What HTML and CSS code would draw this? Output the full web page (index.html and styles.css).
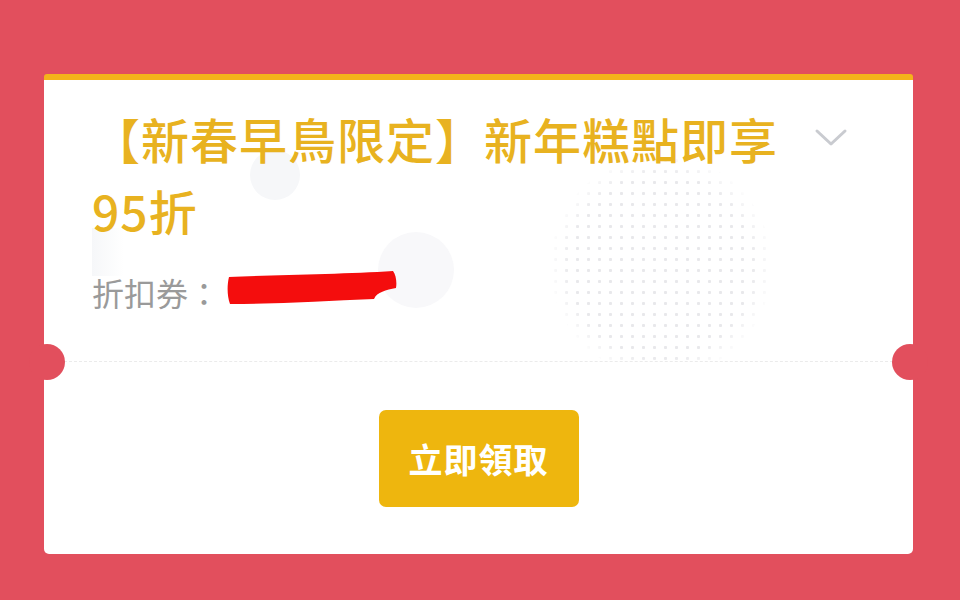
FILE: index.html
```html
<!DOCTYPE html>
<html lang="zh-Hant">

<head>
    <meta charset="UTF-8">
    <meta name="viewport" content="width=device-width, initial-scale=1.0">
    <title>折扣券</title>
    <link rel="stylesheet" href="styles.css">
</head>

<body>
    <div class="coupon">
        <div class="coupon-top">
            <span class="deco deco-dot-small"></span>
            <span class="deco deco-dot-large"></span>
            <span class="deco deco-bar"></span>
            <span class="deco deco-pattern"></span>

            <div class="coupon-head">
                <h2 class="coupon-title">【新春早鳥限定】新年糕點即享95折</h2>
                <button class="toggle" aria-label="展開">
                    <svg width="34" height="20" viewBox="0 0 34 20">
                        <path d="M3 3 L17 16 L31 3" fill="none" stroke="#c9cbd0" stroke-width="3" stroke-linecap="round" stroke-linejoin="round"/>
                    </svg>
                </button>
            </div>
            <div class="coupon-code">
                <span>折扣券：</span>
                <svg class="redact" width="172" height="36" viewBox="0 0 172 36">
                    <path d="M3 7 C50 5 120 4 167 1 C170 5 171 12 170 18 C160 20 151 22 148 29 C100 31 50 34 4 34 C1 26 1 15 3 7 Z" fill="#f40d0d"/>
                </svg>
            </div>
        </div>

        <div class="coupon-bottom">
            <button class="claim">立即領取</button>
        </div>

        <span class="notch notch-left"></span>
        <span class="notch notch-right"></span>
    </div>
</body>

</html>
```

FILE: styles.css
```css
body {
    margin: 0;
    padding: 74px 47px 46px 44px;
    background-color: #e24f5d;
    font-family: "Noto Sans CJK TC", "Noto Sans", sans-serif;
}

.coupon {
    position: relative;
    height: 474px;
    background: #fff;
    border-top: 6px solid #f4b31a;
    border-radius: 3px 3px 5px 5px;
}

.coupon-top {
    position: relative;
    height: 259px;
    padding: 22px 0 0 48px;
    border-bottom: 1px dashed #ebebeb;
    margin-right: 20px;
    overflow: hidden;
}

.deco {
    position: absolute;
    background: #f6f7f9;
}

.deco-dot-small {
    left: 206px;
    top: 70px;
    width: 50px;
    height: 50px;
    border-radius: 50%;
}

.deco-dot-large {
    left: 334px;
    top: 152px;
    width: 76px;
    height: 76px;
    border-radius: 50%;
    background: #f8f8fa;
}

.deco-bar {
    left: 48px;
    top: 148px;
    width: 32px;
    height: 48px;
    background: linear-gradient(90deg, #f6f7f9, #fff);
}

.deco-pattern {
    left: 506px;
    top: 75px;
    width: 222px;
    height: 222px;
    border-radius: 50%;
    background: radial-gradient(circle, #e8e8eb 1.3px, transparent 1.8px) 0 0 / 11px 11px;
    -webkit-mask-image: radial-gradient(circle, #000 58%, transparent 72%);
    mask-image: radial-gradient(circle, #000 58%, transparent 72%);
}

.coupon-head {
    position: relative;
    display: flex;
    align-items: flex-start;
}

.coupon-title {
    width: 700px;
    margin: 0;
    font-size: 48px;
    font-weight: 500;
    line-height: 72px;
    letter-spacing: 1px;
    color: #e8b220;
}

.toggle {
    margin: 26px 0 0 22px;
    padding: 0;
    border: none;
    background: none;
    line-height: 0;
}

.coupon-code {
    position: relative;
    display: flex;
    align-items: center;
    margin-top: 26px;
    font-size: 32px;
    line-height: 40px;
    color: #9a9a9a;
}

.redact {
    margin-left: 6px;
    margin-top: -8px;
}

.coupon-bottom {
    display: flex;
    justify-content: center;
    align-items: center;
    height: 192px;
}

.claim {
    width: 200px;
    height: 97px;
    border: none;
    border-radius: 7px;
    background: #eeb60e;
    color: #fff;
    font-family: inherit;
    font-size: 34px;
    font-weight: 700;
    letter-spacing: 1px;
}

.notch {
    position: absolute;
    top: 264px;
    width: 36px;
    height: 36px;
    border-radius: 50%;
    background: #e24f5d;
}

.notch-left {
    left: -15px;
}

.notch-right {
    right: -15px;
}
```
